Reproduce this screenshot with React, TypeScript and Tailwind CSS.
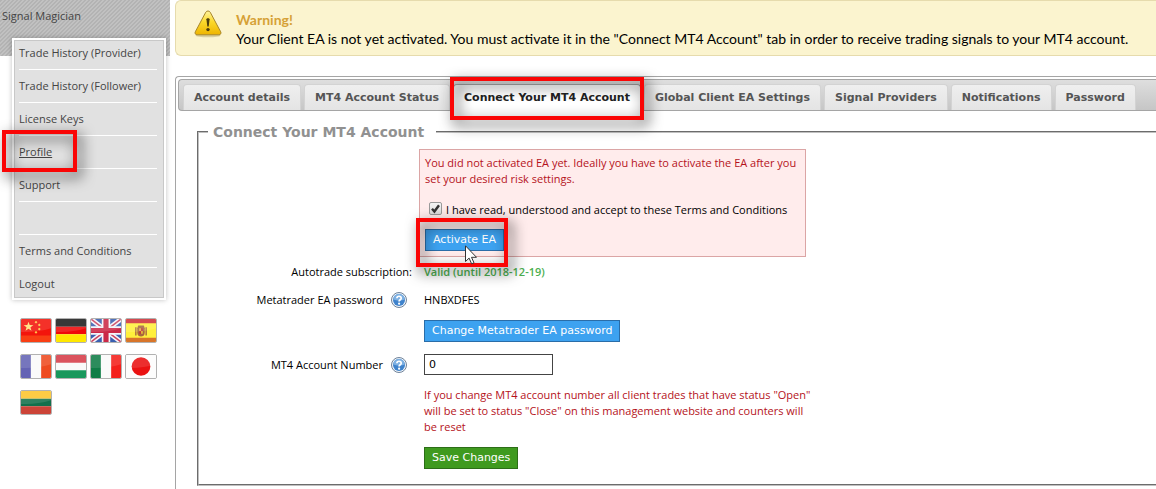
import { useState } from "react";
import type { ReactNode } from "react";

const menuItems = [
  "Trade History (Provider)",
  "Trade History (Follower)",
  "License Keys",
  "Profile",
  "Support",
  "",
  "Terms and Conditions",
  "Logout",
];

const tabs = [
  "Account details",
  "MT4 Account Status",
  "Connect Your MT4 Account",
  "Global Client EA Settings",
  "Signal Providers",
  "Notifications",
  "Password",
];

const flags: { name: string; art: ReactNode }[] = [
  {
    name: "Chinese",
    art: (
      <>
        <path fill="#f3150c" d="M0 0h32v25H0z" />
        <path
          fill="#ffe27a"
          d="M8 3l1.3 3.6 3.9.1-3.1 2.4 1.1 3.7L8 10.6l-3.2 2.2 1.1-3.7-3.1-2.4 3.9-.1z"
        />
        <path
          fill="#ffc94a"
          d="M16 2l1.500 1.500L16 5l-1.500-1.500zM19.500 5L21 6.500 19.500 8 18 6.500zM19.500 9.500L21 11l-1.500 1.500L18 11zM16 13l1.500 1.500L16 16l-1.500-1.500z"
        />
        <path fill="#ff6a1c" opacity="0.5" d="M0 18h32v7H0z" />
      </>
    ),
  },
  {
    name: "German",
    art: (
      <>
        <path fill="#1d1d1d" d="M0 0h32v8.5H0z" />
        <path fill="#f00a0a" d="M0 8.5h32v8H0z" />
        <path fill="#ffe800" d="M0 16.5h32V25H0z" />
      </>
    ),
  },
  {
    name: "English",
    art: (
      <>
        <path fill="#3a5fb0" d="M0 0h32v25H0z" />
        <path stroke="#f4f4fa" strokeWidth="5" d="M0 0l32 25M32 0L0 25" />
        <path stroke="#cc4560" strokeWidth="1.6" d="M0 0l32 25M32 0L0 25" />
        <path stroke="#f4f4fa" strokeWidth="9" d="M16 0v25M0 12.5h32" />
        <path stroke="#cb2847" strokeWidth="5.5" d="M16 0v25M0 12.5h32" />
      </>
    ),
  },
  {
    name: "Spanish",
    art: (
      <>
        <path fill="#fff03c" d="M0 0h32v25H0z" />
        <path fill="#cf3038" d="M0 0h32v4.5H0z" />
        <path fill="#d8752a" d="M0 20.5h32V25H0z" />
        <path fill="#a8673f" d="M13 7h6l1 3v5c0 3-2 4-4 4s-4-1-4-4v-5z" />
        <path stroke="#a8673f" strokeWidth="1.5" d="M10.5 9v9M21.5 9v9" />
        <path fill="#e2b33c" d="M14 10h2v3h-2zM16 13h2v3h-2z" />
        <path fill="#c23a3a" d="M16 10h2v3h-2zM14 13h2v3h-2z" />
      </>
    ),
  },
  {
    name: "French",
    art: (
      <>
        <path fill="#fafafa" d="M0 0h32v25H0z" />
        <path fill="#6463b4" d="M0 0h10.500v25H0z" />
        <path fill="#ee4a20" d="M21.500 0H32v25H21.500z" />
      </>
    ),
  },
  {
    name: "Hungarian",
    art: (
      <>
        <path fill="#fafafa" d="M0 0h32v25H0z" />
        <path fill="#d63c48" d="M0 0h32v8.5H0z" />
        <path fill="#19985c" d="M0 16.5h32V25H0z" />
      </>
    ),
  },
  {
    name: "Italian",
    art: (
      <>
        <path fill="#fafafa" d="M0 0h32v25H0z" />
        <path fill="#107d47" d="M0 0h10.500v25H0z" />
        <path fill="#f4201c" d="M21.500 0H32v25H21.500z" />
      </>
    ),
  },
  {
    name: "Japanese",
    art: (
      <>
        <path fill="#fdfdfd" d="M0 0h32v25H0z" />
        <circle cx="16" cy="12.5" r="10" fill="#ea1212" />
      </>
    ),
  },
  {
    name: "Lithuanian",
    art: (
      <>
        <path fill="#fcc42c" d="M0 0h32v8.5H0z" />
        <path fill="#12704c" d="M0 8.5h32v8H0z" />
        <path fill="#cc4438" d="M0 16.5h32V25H0z" />
      </>
    ),
  },
];

const WarningIcon = () => (
  <svg className="w-7 h-7 shrink-0" viewBox="0 0 28 28">
    <defs>
      <linearGradient id="warn" x1="0" y1="0" x2="0" y2="1">
        <stop offset="0" stopColor="#fff3a0" />
        <stop offset="0.45" stopColor="#fbd92c" />
        <stop offset="1" stopColor="#eeb400" />
      </linearGradient>
    </defs>
    <ellipse cx="14" cy="25.5" rx="12.5" ry="1.8" fill="#d9cf9f" />
    <path
      d="M11.800 2.200c.9-1.600 3.500-1.600 4.400 0l10.500 19.600c.8 1.500-.1 3-1.800 3H3.100c-1.700 0-2.600-1.500-1.800-3z"
      fill="url(#warn)"
      stroke="#a8862a"
      strokeWidth="1"
    />
    <path d="M12.400 9.300c0-1.500 3.200-1.500 3.200 0l-.9 7.200h-1.400z" fill="#4d3d0c" />
    <circle cx="14" cy="19.6" r="1.7" fill="#4d3d0c" />
  </svg>
);

const HelpIcon = () => (
  <svg className="w-4 h-4" viewBox="0 0 16 16">
    <circle cx="8" cy="8" r="7.5" fill="#f2f7fc" stroke="#6f8299" />
    <circle cx="8" cy="8" r="6" fill="#3f83cc" />
    <path d="M2.300 7.500a5.700 5.700 0 0111.400 0c-3 1.500-8 1.500-11.400 0z" fill="#7db0e2" />
    <path
      d="M5.900 6.300c.1-2.700 4.400-2.700 4.300-.1 0 1.600-2.100 1.500-2.100 3.200"
      fill="none"
      stroke="#fff"
      strokeWidth="1.7"
    />
    <circle cx="8.1" cy="11.7" r="1.1" fill="#fff" />
  </svg>
);

const CheckMark = () => (
  <svg
    className="absolute inset-0 w-[13px] h-[13px] pointer-events-none"
    viewBox="0 0 13 13"
  >
    <path d="M3 6.800l2.400 2.700L10 3.200" fill="none" stroke="#333" strokeWidth="2.4" />
  </svg>
);

const Cursor = () => (
  <svg
    className="absolute left-10 top-4 z-20 w-3 h-5 pointer-events-none"
    viewBox="0 0 12 20"
  >
    <path
      d="M.5.800v15.700l3.600-3.400 2.500 5.700 2.400-1-2.500-5.500h5z"
      fill="#fff"
      stroke="#333"
    />
  </svg>
);

const frame =
  "absolute z-10 border-4 border-[#fa0505] pointer-events-none drop-shadow-[4px_5px_7px_rgba(0,0,0,0.8)]";

const buttonBase =
  "relative h-[22px] px-[7px] border font-['DejaVu_Sans'] text-[11px] leading-5 text-white whitespace-nowrap";

export default function App() {
  const [active, setActive] = useState(2);
  const [accepted, setAccepted] = useState(true);
  const [account, setAccount] = useState("0");

  return (
    <div className="flex min-h-screen overflow-hidden bg-white font-['Open_Sans',sans-serif] text-[11px] leading-4 text-black">
      <aside className="w-[170px] shrink-0">
        <div className="h-14 px-[2px] pt-2 text-[#444] bg-[#b9b9b9] bg-[linear-gradient(135deg,#b3b3b3_25%,#c1c1c1_25%,#c1c1c1_50%,#b3b3b3_50%,#b3b3b3_75%,#c1c1c1_75%)] bg-[length:4px_4px] font-medium">
          Signal Magician
        </div>

        <nav className="relative -mt-[18px] ml-3 mr-1 border-2 border-white shadow-[0_0_5px_rgba(0,0,0,0.25)]">
          <ul className="px-1 pb-[5px] border border-[#c8c8c8] bg-[#e1e1e1]">
            {menuItems.map((item, i) => (
              <li
                key={i}
                className="relative h-[33px] pt-2 border-b border-white first:h-[29px] first:pt-1 last:h-[24px] last:border-0 mr-[2px]"
              >
                {item && (
                  <a
                    href="#"
                    className={
                      item === "Profile"
                        ? "font-medium text-[#444] underline"
                        : "font-medium text-[#444] hover:underline"
                    }
                  >
                    {item}
                  </a>
                )}
                {item === "Profile" && (
                  <span className={`${frame} -left-[17px] -top-[6px] w-[75px] h-[42px]`} />
                )}
              </li>
            ))}
          </ul>
        </nav>

        <div className="flex flex-wrap gap-x-[3px] gap-y-[11px] mt-[18px] ml-5">
          {flags.map((flag) => (
            <a key={flag.name} href="#" title={flag.name} className="w-8">
              <svg
                className="block w-8 h-[25px] rounded-xs border border-black/30"
                viewBox="0 0 32 25"
                preserveAspectRatio="none"
              >
                {flag.art}
                <path fill="#fff" opacity="0.12" d="M0 0h32v10Q16 15 0 14z" />
              </svg>
            </a>
          ))}
        </div>
      </aside>

      <main className="flex flex-col flex-1 min-w-0 ml-[5px]">
        <div className="flex h-14 pl-[18px] pt-[9px] border border-r-0 border-[#e6dbad] rounded-l-md bg-[#fbf4cf] font-['Lato',sans-serif] text-sm leading-[19px] whitespace-nowrap">
          <WarningIcon />
          <div className="ml-[14px]">
            <h2 className="font-bold text-[#d6a136]">Warning!</h2>
            <p>
              Your Client EA is not yet activated. You must activate it in the
              "Connect MT4 Account" tab in order to receive trading signals to
              your MT4 account.
            </p>
          </div>
        </div>

        <section className="flex-1 mt-5 pl-[2px] pt-[2px] border border-r-0 border-b-0 border-[#a5a5a5] rounded-tl">
          <div
            role="tablist"
            className="flex items-end gap-[3px] h-8 pl-1 border border-r-0 border-[#a5a5a5] rounded-l bg-linear-to-b from-[#dedede] to-[#c6c6c6]"
          >
            {tabs.map((tab, i) => (
              <button
                key={tab}
                role="tab"
                aria-selected={i === active}
                onClick={() => setActive(i)}
                className={
                  i === active
                    ? "relative h-[27px] -mb-px px-[10px] border border-b-0 border-[#a5a5a5] rounded-t bg-white font-['DejaVu_Sans'] font-bold text-[11px] text-[#222] whitespace-nowrap"
                    : "h-[26px] px-[10px] border border-b-0 border-[#d3d3d3] rounded-t bg-linear-to-b from-[#efefef] to-[#e4e4e4] font-['DejaVu_Sans'] font-bold text-[11px] text-[#555] whitespace-nowrap"
                }
              >
                {tab}
                {tab === "Connect Your MT4 Account" && (
                  <span className={`${frame} -inset-x-[4px] -top-2 -bottom-[9px]`} />
                )}
              </button>
            ))}
          </div>

          <fieldset className="mt-[11px] ml-[19px] pb-[15px] border-2 border-r-0 [border-style:groove] border-[#c0c0c0]">
            <legend className="ml-[9px] pl-[5px] pr-3 font-['DejaVu_Sans'] font-bold text-sm leading-5 text-[#919191]">
              Connect Your MT4 Account
            </legend>

            <div className="ml-[220px] mt-[7px] w-[387px] p-[5px] border border-[#dba5a5] bg-[#ffecec]">
              <p className="text-[#b5121b]">
                You did not activated EA yet. Ideally you have to activate the
                EA after you set your desired risk settings.
              </p>
              <label className="flex items-center gap-1 mt-[15px] ml-1">
                <span className="relative -mt-1">
                  <input
                    type="checkbox"
                    checked={accepted}
                    onChange={(e) => setAccepted(e.target.checked)}
                    className="block appearance-none w-[13px] h-[13px] border border-[#999] rounded-xs bg-linear-to-b from-[#f4f4f4] to-[#dcdcdc]"
                  />
                  {accepted && <CheckMark />}
                </span>
                I have read, understood and accept to these Terms and Conditions
              </label>
              <div className="relative w-fit mt-[11px]">
                <button className={`${buttonBase} border-[#2a6da8] bg-[#3da2f0]`}>
                  Activate EA
                </button>
                <span className={`${frame} -left-[9px] -top-[11px] w-[92px] h-[49px]`} />
                <Cursor />
              </div>
            </div>

            <div className="grid grid-cols-[213px_1fr] gap-x-3 items-center">
              <span className="mt-[7px] text-right font-medium">
                Autotrade subscription:
              </span>
              <span className="mt-[7px] font-semibold text-[#4caf50]">
                Valid (until 2018-12-19)
              </span>

              <span className="flex items-center justify-end gap-2 mt-3 pr-[5px] font-medium">
                Metatrader EA password <HelpIcon />
              </span>
              <span className="mt-3">HNBXDFES</span>

              <button
                className={`${buttonBase} col-start-2 justify-self-start mt-3 border-[#2a6da8] bg-[#3da2f0]`}
              >
                Change Metatrader EA password
              </button>

              <label
                htmlFor="account"
                className="flex items-center justify-end gap-2 mt-3 pr-[5px] font-medium"
              >
                MT4 Account Number <HelpIcon />
              </label>
              <input
                id="account"
                value={account}
                onChange={(e) => setAccount(e.target.value)}
                className="mt-3 w-[129px] h-[21px] px-1 border border-[#444] font-['DejaVu_Sans'] text-[11px]"
              />

              <p className="col-start-2 mt-3 max-w-[390px] text-[#b5121b]">
                If you change MT4 account number all client trades that have
                status "Open" will be set to status "Close" on this management
                website and counters will be reset
              </p>

              <button
                className={`${buttonBase} col-start-2 justify-self-start mt-3 border-[#2c6e17] bg-[#3f9a1f]`}
              >
                Save Changes
              </button>
            </div>
          </fieldset>
        </section>
      </main>
    </div>
  );
}
